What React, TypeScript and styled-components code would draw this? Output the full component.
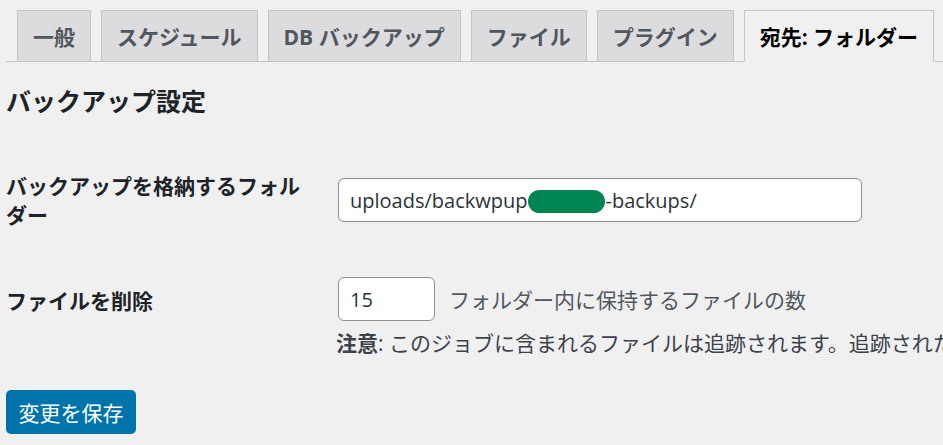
import styled, { createGlobalStyle } from "styled-components";

const GlobalStyle = createGlobalStyle`
  html, body {
    margin: 0;
    padding: 0;
    background: #f0f0f1;
    overflow: hidden;
  }
  body {
    font-family: "Open Sans", "Noto Sans CJK JP", sans-serif;
    color: #1d2327;
  }
`;

const Page = styled.div`
  padding: 0 0 0 6px;
  width: 100vw;
  box-sizing: border-box;
`;

const TabBar = styled.nav`
  display: flex;
  gap: 10px;
  padding: 10px 0 0 11px;
  border-bottom: 1px solid #c3c4c7;
`;

const Tab = styled.a<{ $active?: boolean }>`
  display: flex;
  align-items: center;
  height: 50px;
  padding: 0 15px;
  margin-bottom: -1px;
  border: 1px solid #c3c4c7;
  border-bottom-color: ${p => (p.$active ? "#f0f0f1" : "#c3c4c7")};
  background: ${p => (p.$active ? "#f0f0f1" : "#dcdcde")};
  color: ${p => (p.$active ? "#000" : "#50575e")};
  font-size: 21px;
  font-weight: 700;
  white-space: nowrap;
  text-decoration: none;
`;

const Heading = styled.h2`
  margin: 23px 0 0;
  font-size: 25px;
  line-height: 32px;
  font-weight: 700;
  color: #1d2327;
`;

const Row = styled.div<{ $gap: number }>`
  display: grid;
  grid-template-columns: 304px 1fr;
  column-gap: 28px;
  margin-top: ${p => p.$gap}px;
  align-items: start;
`;

const Label = styled.label<{ $top?: number }>`
  font-size: 21px;
  line-height: 29px;
  font-weight: 700;
  color: #1d2327;
  padding-top: ${p => p.$top ?? 0}px;
`;

const Field = styled.div`
  display: flex;
  flex-direction: column;
  min-width: 0;
`;

const Inline = styled.div`
  display: flex;
  align-items: center;
  gap: 14px;
`;

const TextBox = styled.div<{ $width: number; $top?: number }>`
  box-sizing: border-box;
  width: ${p => p.$width}px;
  height: 44px;
  margin-top: ${p => p.$top ?? 0}px;
  padding: 0 11px;
  display: flex;
  align-items: center;
  background: #fff;
  border: 1px solid #8c8f94;
  border-radius: 6px;
  font-size: 20px;
  color: #2c3338;
  white-space: nowrap;
`;

const Redacted = styled.span`
  display: inline-block;
  width: 77px;
  height: 23px;
  border-radius: 12px;
  background: #008452;
  margin: 2px 0 0 1px;
`;

const Description = styled.span`
  font-size: 21px;
  color: #50575e;
  white-space: nowrap;
`;

const Note = styled.p`
  margin: 8px 0 0 -2px;
  font-size: 21px;
  line-height: 29px;
  color: #3c434a;
  white-space: nowrap;
`;

const SaveButton = styled.button`
  margin-top: 32px;
  height: 44px;
  width: 130px;
  border: none;
  border-radius: 5px;
  background: #0073aa;
  color: #fff;
  font-family: inherit;
  font-size: 21px;
  cursor: pointer;
`;

const tabs = ["一般", "スケジュール", "DB バックアップ", "ファイル", "プラグイン", "宛先: フォルダー"];

function App() {
  return (
    <Page>
      <GlobalStyle />
      <TabBar>
        {tabs.map((t, i) => (
          <Tab key={t} $active={i === tabs.length - 1}>
            {t}
          </Tab>
        ))}
      </TabBar>
      <Heading>バックアップ設定</Heading>
      <Row $gap={55}>
        <Label>バックアップを格納するフォルダー</Label>
        <Field>
          <TextBox $width={524} $top={6}>
            uploads/backwpup<Redacted />-backups/
          </TextBox>
        </Field>
      </Row>
      <Row $gap={47}>
        <Label $top={10}>ファイルを削除</Label>
        <Field>
          <Inline>
            <TextBox $width={97}>15</TextBox>
            <Description>フォルダー内に保持するファイルの数</Description>
          </Inline>
          <Note>
            <strong>注意</strong>: このジョブに含まれるファイルは追跡されます。追跡されたファイルのみが削除されます。
          </Note>
        </Field>
      </Row>
      <SaveButton>変更を保存</SaveButton>
    </Page>
  );
}

export default App;
